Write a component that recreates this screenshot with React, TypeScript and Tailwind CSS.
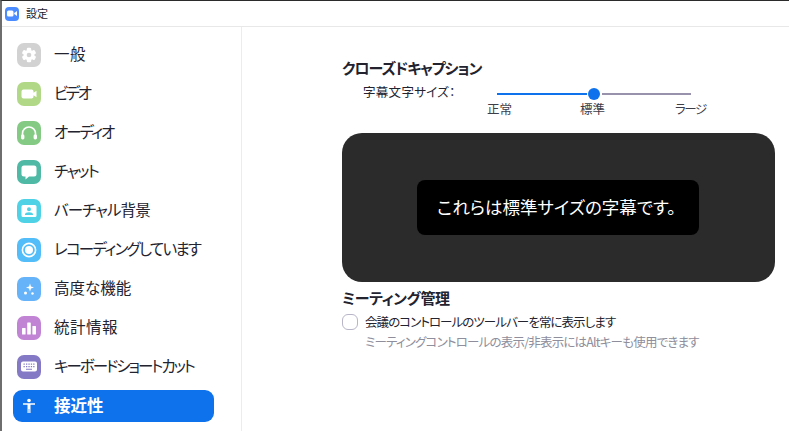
import React from "react";

const font = { fontFamily: '"Noto Sans CJK JP", "Noto Sans", sans-serif' };

function Tile({ color, children }: { color: string; children: React.ReactNode }) {
  return (
    <div className={`w-6 h-6 rounded-[7px] flex items-center justify-center shrink-0 ${color}`}>
      <svg width="24" height="24" viewBox="0 0 24 24" fill="white">{children}</svg>
    </div>
  );
}

const items: { label: string; color: string; track: string; icon: React.ReactNode }[] = [
  {
    label: "一般",
    color: "bg-[#d2d2d2]",
    track: "tracking-[0.4px]",
    icon: (
      <>
        {[0, 60, 120].map((a) => (
          <rect key={a} x="9.800" y="4.800" width="4.400" height="14.400" rx="1.300" transform={`rotate(${a} 12 12)`} />
        ))}
        <circle cx="12" cy="12" r="5.300" />
        <circle cx="12" cy="12" r="2.300" fill="#d2d2d2" />
      </>
    ),
  },
  {
    label: "ビデオ",
    color: "bg-[#b1d886]",
    track: "tracking-[-2.500px]",
    icon: <path d="M6.500 7.500h8a2 2 0 0 1 2 2v1.200l3-2v6.600l-3-2v1.200a2 2 0 0 1-2 2h-8a2 2 0 0 1-2-2v-5a2 2 0 0 1 2-2z" />,
  },
  {
    label: "オーディオ",
    color: "bg-[#84c984]",
    track: "tracking-[-2px]",
    icon: (
      <>
        <path d="M5.500 17v-4.500a6.500 6.500 0 0 1 13 0V17" fill="none" stroke="white" strokeWidth="1.600" />
        <rect x="4" y="13.500" width="3.400" height="5" rx="1.400" />
        <rect x="16.600" y="13.500" width="3.400" height="5" rx="1.400" />
      </>
    ),
  },
  {
    label: "チャット",
    color: "bg-[#4fb9a6]",
    track: "tracking-[-1.700px]",
    icon: <path d="M7 5.500h10a2.500 2.500 0 0 1 2.500 2.500v6a2.500 2.500 0 0 1-2.500 2.500h-5l-3.500 3v-3H7A2.500 2.500 0 0 1 4.500 14V8A2.500 2.500 0 0 1 7 5.500z" />,
  },
  {
    label: "バーチャル背景",
    color: "bg-[#4fd2e6]",
    track: "tracking-[-0.900px]",
    icon: (
      <path fillRule="evenodd" d="M6 6h12a1.500 1.500 0 0 1 1.500 1.500v9A1.500 1.500 0 0 1 18 18H6a1.500 1.500 0 0 1-1.500-1.500v-9A1.500 1.500 0 0 1 6 6z M12 8.300a2 2 0 1 0 0 4 2 2 0 0 0 0-4z M8 16h8v-.7c0-1.300-1.800-2.100-4-2.100s-4 .8-4 2.100z" />
    ),
  },
  {
    label: "レコーディングしています",
    color: "bg-[#52bdf8]",
    track: "tracking-[-1.700px]",
    icon: (
      <>
        <circle cx="12" cy="12" r="6.600" fill="none" stroke="white" strokeWidth="1.600" />
        <circle cx="12" cy="12" r="4" />
      </>
    ),
  },
  {
    label: "高度な機能",
    color: "bg-[#66b3fa]",
    track: "tracking-[0px]",
    icon: (
      <>
        <path d="M13 6.500l1 3 3 1-3 1-1 3-1-3-3-1 3-1z" />
        <circle cx="8.500" cy="16" r="1.500" />
        <circle cx="15.500" cy="16.500" r="1.200" />
      </>
    ),
  },
  {
    label: "統計情報",
    color: "bg-[#c184d4]",
    track: "tracking-[0.500px]",
    icon: (
      <>
        <rect x="5" y="12" width="3.600" height="6.500" rx=".6" />
        <rect x="10.200" y="6.500" width="3.600" height="12" rx=".6" />
        <rect x="15.400" y="10" width="3.600" height="8.500" rx=".6" />
      </>
    ),
  },
  {
    label: "キーボードショートカット",
    color: "bg-[#8479c4]",
    track: "tracking-[-2px]",
    icon: (
      <path fillRule="evenodd" d="M6 6.500h12A2 2 0 0 1 20 8.500v6a2 2 0 0 1-2 2H6a2 2 0 0 1-2-2v-6a2 2 0 0 1 2-2z M6.500 8.500v1.300h1.300V8.500z M9 8.500v1.300h1.300V8.500z M11.400 8.500v1.300h1.300V8.500z M13.800 8.500v1.300h1.300V8.500z M16.200 8.500v1.300h1.300V8.500z M6.500 11v1.300h1.300V11z M9 11v1.300h1.300V11z M11.400 11v1.300h1.300V11z M13.800 11v1.300h1.300V11z M16.200 11v1.300h1.300V11z M9 13.700v1h6v-1z" />
    ),
  },
];

export default function App() {
  return (
    <div className="w-[789px] h-[431px] bg-white overflow-hidden flex flex-col border-t border-l-2 border-t-[#2b2b2b] border-l-[#6e6e6e] text-[#23232f] [font-feature-settings:'palt']" style={font}>
      <div className="h-[26px] shrink-0 flex items-center gap-[7px] pl-[3px] border-b border-[#e8e8e8] text-[11px]">
        <div className="w-[14px] h-[14px] rounded-[4px] bg-[#4a8cff] flex items-center justify-center">
          <svg width="10" height="7" viewBox="0 0 10 7" fill="white">
            <rect x="0" y="0.500" width="6.500" height="6" rx="1.500" />
            <path d="M7.200 3l2.800-2v5L7.200 4z" />
          </svg>
        </div>
        <span>設定</span>
      </div>
      <div className="flex-1 flex min-h-0">
        <nav className="w-[240px] shrink-0 border-r border-[#ececec] pt-[16px] pl-[11px] pr-[27px] flex flex-col gap-[15px]">
          {items.map((it) => (
            <div key={it.label} className="h-6 flex items-center pl-1 gap-[13px] text-[15.500px] whitespace-nowrap">
              <Tile color={it.color}>{it.icon}</Tile>
              <span className={`-mt-[2px] ${it.track}`}>{it.label}</span>
            </div>
          ))}
          <div className="h-8 -mt-[4px] rounded-[9px] bg-[#0e72ed] text-white flex items-center pl-1 gap-[13px] text-[16.500px] font-bold">
            <div className="w-6 h-6 flex items-center justify-center shrink-0">
              <svg width="24" height="24" viewBox="0 0 24 24" fill="white">
                <circle cx="12" cy="6.500" r="1.800" />
                <path d="M6 9.300h12v1.500h-4.500V19h-1.200v-4h-.6v4h-1.200v-8.200H6z" />
              </svg>
            </div>
            <span className="-mt-[2px]">接近性</span>
          </div>
        </nav>
        <main className="flex-1 pl-[100px] pr-[14px] pt-[30px]">
          <h2 className="text-[15px] font-bold leading-[22px] tracking-[-1px]">クローズドキャプション</h2>
          <div className="flex mt-[3px] h-[43px]">
            <div className="w-[155px] pl-[21px] text-[12.500px] leading-[20px] whitespace-nowrap tracking-[0.300px]">字幕文字サイズ：</div>
            <div className="w-[230px] relative">
              <div className="absolute left-0 top-[11px] w-[90px] h-[2px] bg-[#0e72ed]" />
              <div className="absolute left-[105px] top-[11px] w-[89px] h-[2px] bg-[#9892ad]" />
              <div className="absolute left-[91px] top-[6px] w-3 h-3 rounded-full bg-[#0e72ed]" />
              <div className="absolute -left-[10px] top-[18px] text-[12.500px] leading-[18px] whitespace-nowrap text-[#3d3d48]">正常</div>
              <div className="absolute left-[83px] top-[18px] text-[12.500px] leading-[18px] whitespace-nowrap text-[#3d3d48]">標準</div>
              <div className="absolute left-[178px] top-[18px] text-[12.500px] leading-[18px] whitespace-nowrap text-[#3d3d48] tracking-[-1.500px]">ラージ</div>
            </div>
          </div>
          <div className="w-[433px] h-[149px] mt-[8px] rounded-[20px] bg-[#2b2b2b] flex items-center justify-center">
            <div className="w-[282px] h-[55px] -ml-[1px] pr-[3px] rounded-[8px] bg-black text-white text-[17.500px] flex items-center justify-center whitespace-nowrap">
              これらは標準サイズの字幕です。
            </div>
          </div>
          <h2 className="text-[15px] font-bold leading-[22px] mt-[5px] tracking-[-0.400px]">ミーティング管理</h2>
          <div className="flex items-center mt-[3px] h-[20px] gap-[7px] text-[12.500px] whitespace-nowrap">
            <div className="w-4 h-4 rounded-[6px] border border-[#b8b5c8] bg-white" />
            <span className="tracking-[-0.950px]">会議のコントロールのツールバーを常に表示します</span>
          </div>
          <div className="pl-[23px] text-[12.500px] leading-[20px] text-[#8e8e9c] whitespace-nowrap tracking-[-0.800px]">
            ミーティングコントロールの表示/非表示にはAltキーも使用できます
          </div>
        </main>
      </div>
    </div>
  );
}
